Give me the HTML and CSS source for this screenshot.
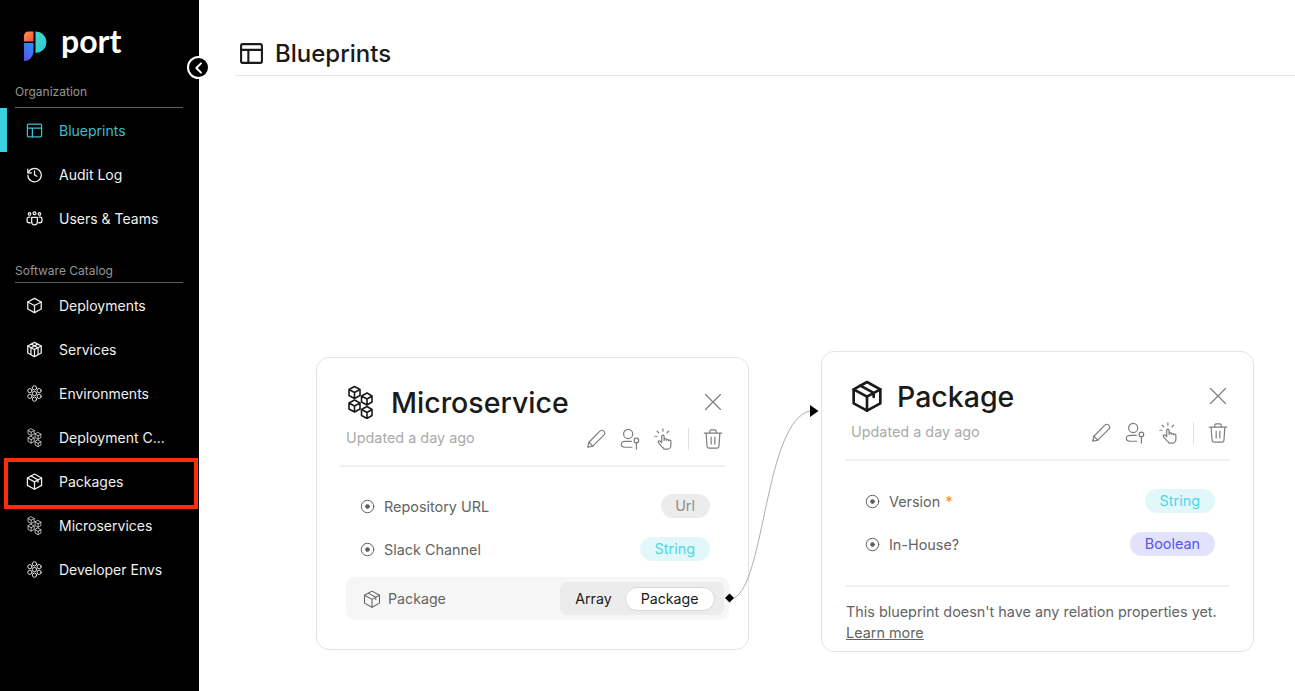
FILE: index.html
```html
<!DOCTYPE html>
<html lang="en">
<head>
    <meta charset="UTF-8" />
    <title>Blueprints</title>
    <link rel="stylesheet" href="styles.css">
</head>
<body>
    <!-- icon sprite -->
    <svg class="sprite" xmlns="http://www.w3.org/2000/svg">
        <defs>
            <linearGradient id="g-orange" x1="0" y1="0" x2="1" y2="1"><stop offset="0" stop-color="#ff9a3d"/><stop offset="1" stop-color="#f0485a"/></linearGradient>
            <linearGradient id="g-blue" x1="0.6" y1="0" x2="0.2" y2="1"><stop offset="0" stop-color="#2f8cf5"/><stop offset="1" stop-color="#5a50e8"/></linearGradient>
            <linearGradient id="g-cyan" x1="0" y1="0" x2="1" y2="1"><stop offset="0" stop-color="#3fdcb8"/><stop offset="1" stop-color="#34c3e8"/></linearGradient>
        </defs>
        <symbol id="i-layout" viewBox="0 0 24 24"><rect x="2" y="3" width="20" height="18" rx="1.5"/><path d="M2 8.5h20M9 8.5V21"/></symbol>
        <symbol id="i-history" viewBox="0 0 24 24"><path d="M3.2 9.5A9.5 9.5 0 1 1 2.6 13"/><path d="M2.6 4.500v5.200h5.200"/><path d="M12 7v5.500l3.500 2"/></symbol>
        <symbol id="i-users" viewBox="0 0 24 24"><circle cx="12" cy="4.500" r="2"/><circle cx="5" cy="5.500" r="1.700"/><circle cx="19" cy="5.500" r="1.700"/><path d="M8 10.500h8v6.500a4 4 0 0 1-8 0z"/><path d="M5.500 10H4a2.500 2.500 0 0 0-2.500 2.500V15a3 3 0 0 0 3 3h1.500M18.500 10H20a2.500 2.500 0 0 1 2.500 2.500V15a3 3 0 0 1-3 3H18"/></symbol>
        <symbol id="i-box" viewBox="0 0 24 24"><path d="M12 2l9.500 5v10L12 22l-9.500-5V7z"/><path d="M2.500 7L12 12l9.500-5M12 12v10"/></symbol>
        <symbol id="i-parcel" viewBox="0 0 24 24"><path d="M12 1.500l10 5.500v10.500L12 23 2 17.500V7z"/><path d="M2 7l10 5.500L22 7M12 12.500V23M7 4.200l10 5.500v3"/></symbol>
        <symbol id="i-gift" viewBox="0 0 24 24"><path d="M12 2l9.500 5v10L12 22l-9.500-5V7z"/><path d="M2.500 7L12 12l9.500-5M12 12v10M7.500 4.500L17 9.500V19M16.500 4.500L7 9.500V19"/></symbol>
        <symbol id="i-atom" viewBox="0 0 24 24"><circle cx="12" cy="4" r="3"/><circle cx="12" cy="20" r="3"/><circle cx="5.500" cy="8" r="3"/><circle cx="18.500" cy="8" r="3"/><circle cx="5.500" cy="16" r="3"/><circle cx="18.500" cy="16" r="3"/><circle cx="12" cy="12" r="3"/></symbol>
        <symbol id="i-cubes" viewBox="0 0 25 34">
            <path d="M6.500 1.500l5.500 3v6l-5.500 3-5.500-3v-6zM1 4.500l5.500 3 5.500-3M6.500 7.500v6"/>
            <path d="M19 8l5 3v6l-5 3-5.500-3v-6zM13.500 11l5.500 3 5-3M19 14v6"/>
            <path d="M6.500 15l5.500 3v6l-5.500 3L1 24v-6zM1 18l5.500 3 5.500-3M6.500 21v6"/>
            <path d="M19 21.500l5 3v6l-5 3-5.500-3v-6zM13.500 24.500l5.500 3 5-3M19 27.500v6"/>
        </symbol>
        <symbol id="i-pencil" viewBox="0 0 24 24"><path d="M3 21l1.300-5.500L16.500 3.200a2.500 2.500 0 0 1 3.600 0l.7.700a2.500 2.500 0 0 1 0 3.600L8.500 19.700z"/><path d="M4.300 15.500l4.200 4.200"/></symbol>
        <symbol id="i-userkey" viewBox="0 0 24 24"><circle cx="10" cy="6.500" r="5"/><path d="M13.500 14.500H7c-6 0-6 6.500 0 6.500h7"/><circle cx="19" cy="13.500" r="2.500"/><path d="M19 16v7"/></symbol>
        <symbol id="i-tap" viewBox="0 0 24 24"><path d="M10 21l-4-5c-1-1.500.8-2.800 2-1.500l1.500 1.500V9a1.300 1.300 0 0 1 2.600 0v4.500-1a1.300 1.300 0 0 1 2.500 0v1a1.300 1.300 0 0 1 2.500 0v.500a1.300 1.300 0 0 1 2.400 0V19a4 4 0 0 1-4 4h-3.500a4 4 0 0 1-1-2z"/><path d="M10.800 1v2.500M4.500 3.500l1.800 1.800M17 3.500l-1.800 1.800M2 9h2.500"/></symbol>
        <symbol id="i-trash" viewBox="0 0 24 24"><path d="M2.500 5.500h19M8.500 5V3.500A1.500 1.500 0 0 1 10 2h4a1.500 1.500 0 0 1 1.500 1.500V5M4.500 5.500l1 14.500a2 2 0 0 0 2 2h9a2 2 0 0 0 2-2l1-14.500M10 10v7.500M14 10v7.500"/></symbol>
        <symbol id="i-close" viewBox="0 0 24 24"><path d="M3 3l18 18M21 3L3 21"/></symbol>
        <symbol id="i-prop" viewBox="0 0 24 24"><circle cx="12" cy="12" r="10"/><circle class="dot" cx="12" cy="12" r="3"/></symbol>
    </svg>

    <div class="app">
        <!-- Sidebar -->
        <aside class="sidebar">
            <div class="logo">
                <svg class="logo-mark" viewBox="0 0 24 30">
                    <path fill="url(#g-orange)" d="M1 10.500V5a4.500 4.500 0 0 1 4.500-4.500H10.500v10z"/>
                    <path fill="url(#g-blue)" d="M1 12h9.500v9A9.500 9.500 0 0 1 1 30z"/>
                    <path fill="url(#g-cyan)" d="M12.500.5A11 11 0 0 1 23.500 11.500 11 11 0 0 1 12.500 22z"/>
                </svg>
                <span class="logo-text">port</span>
            </div>

            <div class="nav-label">Organization</div>
            <ul class="nav">
                <li class="nav-item active"><svg class="icon"><use href="#i-layout"/></svg>Blueprints</li>
                <li class="nav-item"><svg class="icon"><use href="#i-history"/></svg>Audit Log</li>
                <li class="nav-item"><svg class="icon"><use href="#i-users"/></svg>Users &amp; Teams</li>
            </ul>

            <div class="nav-label second">Software Catalog</div>
            <ul class="nav">
                <li class="nav-item"><svg class="icon"><use href="#i-box"/></svg>Deployments</li>
                <li class="nav-item"><svg class="icon"><use href="#i-gift"/></svg>Services</li>
                <li class="nav-item"><svg class="icon thin"><use href="#i-atom"/></svg>Environments</li>
                <li class="nav-item"><svg class="icon tall"><use href="#i-cubes"/></svg>Deployment C...</li>
                <li class="nav-item"><svg class="icon"><use href="#i-parcel"/></svg>Packages</li>
                <li class="nav-item"><svg class="icon tall"><use href="#i-cubes"/></svg>Microservices</li>
                <li class="nav-item"><svg class="icon thin"><use href="#i-atom"/></svg>Developer Envs</li>
            </ul>

            <div class="highlight"></div>
            <div class="collapse-btn">
                <svg viewBox="0 0 24 24"><path d="M15 5l-7 7 7 7"/></svg>
            </div>
        </aside>

        <!-- Main area -->
        <main class="main">
            <header class="page-head">
                <svg class="head-icon"><use href="#i-layout"/></svg>
                <h1>Blueprints</h1>
            </header>

            <div class="canvas">
                <svg class="edge" viewBox="0 0 1295 691">
                    <path d="M734 598C765 585 765 420 810 411"/>
                    <path class="tip" d="M725 598l4.500-4.500 4.500 4.500-4.500 4.500z"/>
                    <path class="tip" d="M810 405l8.500 6-8.500 6z"/>
                </svg>

                <section class="card card-micro">
                    <div class="card-top">
                        <svg class="card-icon"><use href="#i-cubes"/></svg>
                        <h2>Microservice</h2>
                        <svg class="close"><use href="#i-close"/></svg>
                    </div>
                    <div class="card-sub">
                        <span class="updated">Updated a day ago</span>
                        <div class="actions">
                            <svg class="act"><use href="#i-pencil"/></svg>
                            <svg class="act"><use href="#i-userkey"/></svg>
                            <svg class="act"><use href="#i-tap"/></svg>
                            <span class="sep"></span>
                            <svg class="act"><use href="#i-trash"/></svg>
                        </div>
                    </div>
                    <div class="props">
                        <div class="prop"><svg class="prop-icon"><use href="#i-prop"/></svg>Repository URL<span class="pill pill-grey">Url</span></div>
                        <div class="prop"><svg class="prop-icon"><use href="#i-prop"/></svg>Slack Channel<span class="pill pill-cyan">String</span></div>
                    </div>
                    <div class="relation">
                        <svg class="rel-icon"><use href="#i-parcel"/></svg>Package
                        <div class="toggle"><span>Array</span><span class="toggle-on">Package</span></div>
                    </div>
                </section>

                <section class="card card-package">
                    <div class="card-top">
                        <svg class="card-icon thick"><use href="#i-parcel"/></svg>
                        <h2>Package</h2>
                        <svg class="close"><use href="#i-close"/></svg>
                    </div>
                    <div class="card-sub">
                        <span class="updated">Updated a day ago</span>
                        <div class="actions">
                            <svg class="act"><use href="#i-pencil"/></svg>
                            <svg class="act"><use href="#i-userkey"/></svg>
                            <svg class="act"><use href="#i-tap"/></svg>
                            <span class="sep"></span>
                            <svg class="act"><use href="#i-trash"/></svg>
                        </div>
                    </div>
                    <div class="props">
                        <div class="prop"><svg class="prop-icon"><use href="#i-prop"/></svg>Version<b class="req">*</b><span class="pill pill-cyan">String</span></div>
                        <div class="prop"><svg class="prop-icon"><use href="#i-prop"/></svg>In-House?<span class="pill pill-violet">Boolean</span></div>
                    </div>
                    <div class="no-rel">
                        <p>This blueprint doesn't have any relation properties yet.</p>
                        <a class="learn">Learn more</a>
                    </div>
                </section>
            </div>
        </main>
    </div>
</body>
</html>
```

FILE: styles.css
```css
/* Page */
* {
    box-sizing: border-box;
}

html,
body {
    margin: 0;
    height: 100%;
    overflow: hidden;
    background-color: white;
    font-family: "Inter", "Liberation Sans", sans-serif;
}

.sprite {
    position: absolute;
    width: 0;
    height: 0;
}

svg {
    fill: none;
    stroke: currentColor;
    stroke-linejoin: round;
    stroke-linecap: round;
}

.app {
    display: flex;
    height: 691px;
}

/* Sidebar */
.sidebar {
    position: relative;
    width: 199px;
    flex: none;
    background-color: black;
    color: rgb(240, 240, 240);
}

.logo {
    display: flex;
    align-items: center;
    height: 84px;
    padding: 0 0 2px 23px;
}

.logo-mark {
    width: 24px;
    height: 30px;
    margin-top: 10px;
    stroke: none;
}

.logo-mark path {
    stroke: none;
}

.logo-text {
    margin-left: 14px;
    color: white;
    font-family: "Lato", sans-serif;
    font-size: 32px;
    font-weight: 700;
    line-height: 30px;
}

.nav-label {
    height: 24px;
    margin: 0 16px 0 15px;
    border-bottom: 1px solid rgb(96, 96, 96);
    color: rgb(150, 150, 150);
    font-size: 12px;
    line-height: 15px;
}

.nav-label.second {
    margin-top: 23px;
    height: 20px;
}

.nav {
    list-style: none;
    margin: 0;
    padding: 0;
}

.nav-item {
    display: flex;
    align-items: center;
    height: 44px;
    padding-left: 26px;
    font-size: 14px;
    font-weight: 400;
}

.nav-item .icon {
    width: 17px;
    height: 17px;
    margin-right: 16px;
    stroke-width: 1.8;
}

.nav-item .icon.thin {
    stroke-width: 1.3;
}

.nav-item .icon.tall {
    height: 19px;
    stroke-width: 1.3;
}

.nav-item.active {
    border-left: 7px solid rgb(58, 210, 224);
    padding-left: 19px;
    color: rgb(58, 190, 210);
}

.highlight {
    position: absolute;
    left: 4px;
    top: 458px;
    width: 194px;
    height: 51px;
    border: 4px solid rgb(255, 45, 10);
}

.collapse-btn {
    position: absolute;
    left: 187px;
    top: 56px;
    width: 23px;
    height: 23px;
    border: 2px solid white;
    border-radius: 50%;
    background-color: black;
    color: white;
    display: flex;
    align-items: center;
    justify-content: center;
}

.collapse-btn svg {
    width: 16px;
    height: 16px;
    stroke-width: 3;
}

/* Main */
.main {
    flex: 1;
    min-width: 0;
    display: flex;
    flex-direction: column;
}

.page-head {
    display: flex;
    align-items: center;
    height: 76px;
    margin-left: 36px;
    padding: 32px 0 0 4px;
    border-bottom: 1px solid rgb(229, 229, 229);
    color: rgb(26, 26, 26);
}

.head-icon {
    width: 25px;
    height: 25px;
    stroke-width: 2;
    margin-right: 11px;
}

.page-head h1 {
    margin: 0;
    font-family: "Inter", sans-serif;
    font-size: 24px;
    font-weight: 500;
}

.canvas {
    position: relative;
    flex: 1;
}

.edge {
    position: absolute;
    left: -199px;
    top: -76px;
    z-index: 1;
    width: 1295px;
    height: 691px;
    stroke: rgb(175, 175, 175);
    stroke-width: 1;
    pointer-events: none;
}

.edge .tip {
    fill: black;
    stroke: none;
}

/* Blueprint cards */
.card {
    position: absolute;
    width: 433px;
    display: flex;
    flex-direction: column;
    background-color: white;
    border: 1px solid rgb(228, 228, 228);
    border-radius: 13px;
    padding: 1px 23.5px 0 23px;
}

.card-micro {
    left: 117px;
    top: 281px;
    height: 293px;
}

.card-package {
    left: 622px;
    top: 275px;
    height: 301px;
}

.card-top {
    display: flex;
    align-items: center;
    height: 63px;
    padding: 23px 0 0 8px;
    color: rgb(26, 26, 26);
}

.card-icon {
    width: 25px;
    height: 34px;
    stroke-width: 1.6;
    margin-right: 18px;
}

.card-icon.thick {
    width: 32px;
    height: 32px;
    margin-left: -2px;
    margin-right: 14px;
    stroke-width: 2;
}

.card-top h2 {
    margin: 0;
    font-family: "Inter", sans-serif;
    font-size: 28.5px;
    font-weight: 500;
}

.close {
    width: 20px;
    height: 20px;
    margin-left: auto;
    margin-right: 2px;
    color: rgb(125, 125, 125);
    stroke-width: 1.4;
}

.card-sub {
    display: flex;
    align-items: center;
    justify-content: space-between;
    height: 45px;
    padding: 0 1px 13px 6px;
    border-bottom: 2px solid rgb(240, 240, 240);
}

.updated {
    font-size: 14.4px;
    color: rgb(170, 170, 170);
}

.actions {
    display: flex;
    align-items: center;
    gap: 12px;
    margin-top: 4px;
    color: rgb(125, 125, 125);
}

.act {
    width: 22px;
    height: 22px;
    stroke-width: 1.3;
}

.sep {
    width: 1px;
    height: 22px;
    margin: 0 1px;
    background-color: rgb(225, 225, 225);
}

.props {
    display: flex;
    flex-direction: column;
    gap: 7px;
    padding: 21px 15px 0 20px;
}

.card-package .props {
    padding-top: 22px;
}

.prop {
    display: flex;
    align-items: center;
    height: 36px;
    font-size: 14.4px;
    color: rgb(100, 100, 100);
}

.prop-icon {
    width: 15px;
    height: 15px;
    margin-right: 9px;
    stroke-width: 1.6;
    color: rgb(95, 95, 95);
}

.dot {
    fill: currentColor;
}

.req {
    margin-left: 5px;
    color: rgb(255, 140, 60);
    font-weight: 500;
}

.pill {
    margin-left: auto;
    padding: 0 14.5px;
    height: 24px;
    border-radius: 12px;
    font-size: 14.4px;
    line-height: 24px;
}

.pill-grey {
    background-color: rgb(236, 236, 236);
    color: rgb(140, 140, 140);
}

.pill-cyan {
    background-color: rgb(225, 247, 250);
    color: rgb(75, 215, 230);
}

.pill-violet {
    background-color: rgb(226, 226, 252);
    color: rgb(90, 85, 240);
}

.relation {
    display: flex;
    align-items: center;
    height: 43px;
    margin: 10px -4px 0 6px;
    padding: 0 5px 0 17px;
    border-radius: 9px;
    background-color: rgb(246, 246, 246);
    font-size: 14.2px;
    color: rgb(100, 100, 100);
}

.rel-icon {
    width: 18px;
    height: 18px;
    margin-right: 7px;
    stroke-width: 1.4;
}

.toggle {
    display: flex;
    align-items: center;
    height: 33px;
    margin-left: auto;
    padding: 0 9px 0 15px;
    gap: 13px;
    border-radius: 7px;
    background-color: rgb(236, 236, 236);
    color: rgb(26, 26, 26);
}

.toggle-on {
    height: 24px;
    line-height: 21px;
    padding: 0 15px;
    border: 1.5px solid rgb(215, 215, 215);
    border-radius: 12px;
    background-color: white;
}

.no-rel {
    margin: 23px 0 0 1px;
    padding-top: 14px;
    border-top: 2px solid rgb(240, 240, 240);
    font-size: 14.4px;
    line-height: 21px;
    color: rgb(100, 100, 100);
}

.no-rel p {
    margin: 0;
}

.learn {
    text-decoration: underline;
}
```
